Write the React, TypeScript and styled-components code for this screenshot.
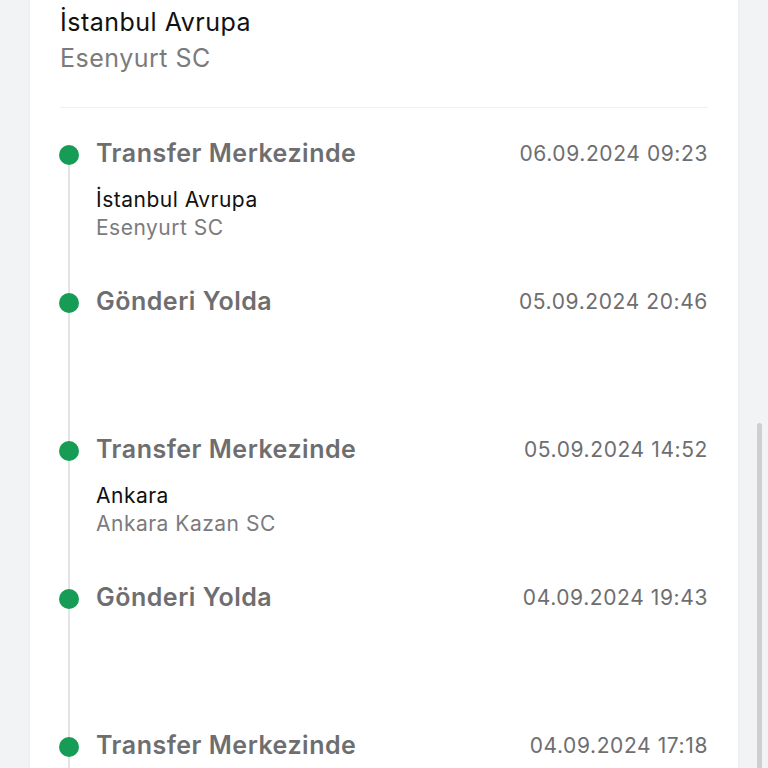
import React from 'react';
import styled, { createGlobalStyle } from 'styled-components';

const GlobalStyle = createGlobalStyle`
  html, body {
    margin: 0;
    padding: 0;
    background: #f2f3f5;
    font-family: Inter, "Noto Sans", "Liberation Sans", sans-serif;
    overflow: hidden;
  }
`;

const Page = styled.div`
  height: 768px;
  overflow: hidden;
  position: relative;
`;

const Card = styled.div`
  margin: 0 30px;
  background: #ffffff;
  padding: 4px 30px 0 30px;
  min-height: 768px;
  box-shadow: 0 0 3px rgba(0, 0, 0, 0.05);
`;

const Location = styled.div`
  padding-bottom: 31px;
  border-bottom: 1px solid #f0f0f1;
`;

const City = styled.div<{ size: number; lh: number }>`
  font-size: ${p => p.size}px;
  line-height: ${p => p.lh}px;
  letter-spacing: 0.5px;
  color: #111111;
`;

const Center = styled.div<{ size: number; lh: number }>`
  font-size: ${p => p.size}px;
  line-height: ${p => p.lh}px;
  letter-spacing: 0.5px;
  color: #7b7b7d;
`;

const Timeline = styled.div`
  padding-top: 30px;
`;

const Entry = styled.div`
  display: grid;
  grid-template-columns: 20px 1fr;
  column-gap: 17px;
  height: 148px;
  margin-left: -1px;
`;

const Rail = styled.div<{ first?: boolean }>`
  padding-top: 7px;
  background-image: linear-gradient(
    to right,
    transparent 9px,
    #e4e4e6 9px,
    #e4e4e6 11px,
    transparent 11px
  );
  background-repeat: no-repeat;
  background-position: 0 ${p => (p.first ? 16 : 0)}px;
`;

const Dot = styled.div`
  width: 20px;
  height: 20px;
  border-radius: 50%;
  background: #169c55;
`;

const Body = styled.div`
  display: flex;
  flex-direction: column;
`;

const Head = styled.div`
  display: flex;
  justify-content: space-between;
  align-items: center;
  height: 30px;
  margin-bottom: 18px;
`;

const Status = styled.div`
  font-size: 25px;
  font-weight: 600;
  letter-spacing: 0.5px;
  color: #6e6e70;
`;

const Stamp = styled.div`
  font-size: 21px;
  letter-spacing: 0.6px;
  color: #6e6e70;
`;

const ScrollThumb = styled.div`
  position: absolute;
  right: 6px;
  top: 423px;
  width: 5px;
  height: 360px;
  border-radius: 3px;
  background: #cfcfd1;
`;

type Event = {
  status: string;
  date: string;
  city?: string;
  center?: string;
};

const events: Event[] = [
  { status: 'Transfer Merkezinde', date: '06.09.2024 09:23', city: 'İstanbul Avrupa', center: 'Esenyurt SC' },
  { status: 'Gönderi Yolda', date: '05.09.2024 20:46' },
  { status: 'Transfer Merkezinde', date: '05.09.2024 14:52', city: 'Ankara', center: 'Ankara Kazan SC' },
  { status: 'Gönderi Yolda', date: '04.09.2024 19:43' },
  { status: 'Transfer Merkezinde', date: '04.09.2024 17:18' },
];

const App: React.FC = () => {
  return (
    <Page>
      <GlobalStyle />
      <Card>
        <Location>
          <City size={25} lh={36}>İstanbul Avrupa</City>
          <Center size={25} lh={36}>Esenyurt SC</Center>
        </Location>

        <Timeline>
          {events.map((ev, i) => (
            <Entry key={i}>
              <Rail first={i === 0}>
                <Dot />
              </Rail>
              <Body>
                <Head>
                  <Status>{ev.status}</Status>
                  <Stamp>{ev.date}</Stamp>
                </Head>
                {ev.city && <City size={21} lh={28}>{ev.city}</City>}
                {ev.center && <Center size={21} lh={28}>{ev.center}</Center>}
              </Body>
            </Entry>
          ))}
        </Timeline>
      </Card>
      <ScrollThumb />
    </Page>
  );
};

export default App;
